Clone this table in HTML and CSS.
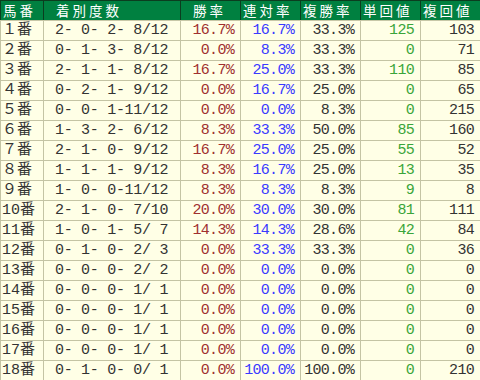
FILE: index.html
```html
<!DOCTYPE html>
<html lang="ja">
<head>
<meta charset="utf-8">
<link rel="stylesheet" href="styles.css">
</head>
<body>
<table class="stats">
  <colgroup>
    <col class="c-no"><col class="c-rec"><col class="c-p"><col class="c-p2"><col class="c-p"><col class="c-p"><col class="c-p">
  </colgroup>
  <thead>
    <tr>
      <th class="h-no">馬番</th>
      <th class="h-rec">着別度数</th>
      <th class="h-win">勝率</th>
      <th class="h-l">連対率</th>
      <th class="h-l">複勝率</th>
      <th class="h-l">単回値</th>
      <th class="h-l">複回値</th>
    </tr>
  </thead>
  <tbody>
    <tr><td class="no">１番</td><td class="rec">2- 0- 2- 8/12</td><td class="win">16.7%</td><td class="ren">16.7%</td><td class="fuku">33.3%</td><td class="tan">125</td><td class="fk">103</td></tr>
    <tr><td class="no">２番</td><td class="rec">0- 1- 3- 8/12</td><td class="win">0.0%</td><td class="ren">8.3%</td><td class="fuku">33.3%</td><td class="tan">0</td><td class="fk">71</td></tr>
    <tr><td class="no">３番</td><td class="rec">2- 1- 1- 8/12</td><td class="win">16.7%</td><td class="ren">25.0%</td><td class="fuku">33.3%</td><td class="tan">110</td><td class="fk">85</td></tr>
    <tr><td class="no">４番</td><td class="rec">0- 2- 1- 9/12</td><td class="win">0.0%</td><td class="ren">16.7%</td><td class="fuku">25.0%</td><td class="tan">0</td><td class="fk">65</td></tr>
    <tr><td class="no">５番</td><td class="rec">0- 0- 1-11/12</td><td class="win">0.0%</td><td class="ren">0.0%</td><td class="fuku">8.3%</td><td class="tan">0</td><td class="fk">215</td></tr>
    <tr><td class="no">６番</td><td class="rec">1- 3- 2- 6/12</td><td class="win">8.3%</td><td class="ren">33.3%</td><td class="fuku">50.0%</td><td class="tan">85</td><td class="fk">160</td></tr>
    <tr><td class="no">７番</td><td class="rec">2- 1- 0- 9/12</td><td class="win">16.7%</td><td class="ren">25.0%</td><td class="fuku">25.0%</td><td class="tan">55</td><td class="fk">52</td></tr>
    <tr><td class="no">８番</td><td class="rec">1- 1- 1- 9/12</td><td class="win">8.3%</td><td class="ren">16.7%</td><td class="fuku">25.0%</td><td class="tan">13</td><td class="fk">35</td></tr>
    <tr><td class="no">９番</td><td class="rec">1- 0- 0-11/12</td><td class="win">8.3%</td><td class="ren">8.3%</td><td class="fuku">8.3%</td><td class="tan">9</td><td class="fk">8</td></tr>
    <tr><td class="no">10番</td><td class="rec">2- 1- 0- 7/10</td><td class="win">20.0%</td><td class="ren">30.0%</td><td class="fuku">30.0%</td><td class="tan">81</td><td class="fk">111</td></tr>
    <tr><td class="no">11番</td><td class="rec">1- 0- 1- 5/ 7</td><td class="win">14.3%</td><td class="ren">14.3%</td><td class="fuku">28.6%</td><td class="tan">42</td><td class="fk">84</td></tr>
    <tr><td class="no">12番</td><td class="rec">0- 1- 0- 2/ 3</td><td class="win">0.0%</td><td class="ren">33.3%</td><td class="fuku">33.3%</td><td class="tan">0</td><td class="fk">36</td></tr>
    <tr><td class="no">13番</td><td class="rec">0- 0- 0- 2/ 2</td><td class="win">0.0%</td><td class="ren">0.0%</td><td class="fuku">0.0%</td><td class="tan">0</td><td class="fk">0</td></tr>
    <tr><td class="no">14番</td><td class="rec">0- 0- 0- 1/ 1</td><td class="win">0.0%</td><td class="ren">0.0%</td><td class="fuku">0.0%</td><td class="tan">0</td><td class="fk">0</td></tr>
    <tr><td class="no">15番</td><td class="rec">0- 0- 0- 1/ 1</td><td class="win">0.0%</td><td class="ren">0.0%</td><td class="fuku">0.0%</td><td class="tan">0</td><td class="fk">0</td></tr>
    <tr><td class="no">16番</td><td class="rec">0- 0- 0- 1/ 1</td><td class="win">0.0%</td><td class="ren">0.0%</td><td class="fuku">0.0%</td><td class="tan">0</td><td class="fk">0</td></tr>
    <tr><td class="no">17番</td><td class="rec">0- 0- 0- 1/ 1</td><td class="win">0.0%</td><td class="ren">0.0%</td><td class="fuku">0.0%</td><td class="tan">0</td><td class="fk">0</td></tr>
    <tr><td class="no">18番</td><td class="rec">0- 1- 0- 0/ 1</td><td class="win">0.0%</td><td class="ren">100.0%</td><td class="fuku">100.0%</td><td class="tan">0</td><td class="fk">210</td></tr>
  </tbody>
</table>
</body>
</html>
```

FILE: styles.css
```css
html, body {
  margin: 0;
  padding: 0;
  background: #ffffff;
}

.stats {
  border-collapse: collapse;
  table-layout: fixed;
  width: 480px;
  font-family: "Liberation Mono", "Noto Sans CJK JP", monospace;
  font-size: 15px;
  color: #333333;
}

.c-no { width: 43px; }
.c-rec { width: 137px; }
.c-p { width: 60px; }
.c-p2 { width: 60px; }

.stats th,
.stats td {
  height: 19px;
  padding: 0;
  line-height: 19px;
  white-space: pre;
  vertical-align: middle;
}

.stats th {
  background: #008040;
  color: #ffffff;
  font-family: "Noto Sans CJK JP", sans-serif;
  font-weight: normal;
  font-size: 13.5px;
  line-height: 19px;
  text-align: left;
  border: 1px solid #0b3d1f;
  border-bottom-color: #c8c8a8;
  padding-left: 2px;
  letter-spacing: 3px;
}

.stats th.h-no { padding-left: 2px; }
.stats th.h-rec { padding-left: 12px; }
.stats th.h-win { padding-left: 12px; }

.stats td {
  background: #ffffe6;
  border: 1px solid #c4c4a4;
  text-align: right;
  padding-right: 6px;
  letter-spacing: -0.7px;
}

.stats td.no {
  text-align: left;
  padding-left: 1px;
  padding-right: 0;
  letter-spacing: 0;
}

.stats td.rec {
  text-align: left;
  padding-left: 11px;
  padding-right: 0;
  letter-spacing: -0.3px;
}

.win { color: #a03030; }
.ren { color: #3a3aff; }
.fuku { color: #333333; }
.tan { color: #3aa53a; }
.fk { color: #333333; }
```
